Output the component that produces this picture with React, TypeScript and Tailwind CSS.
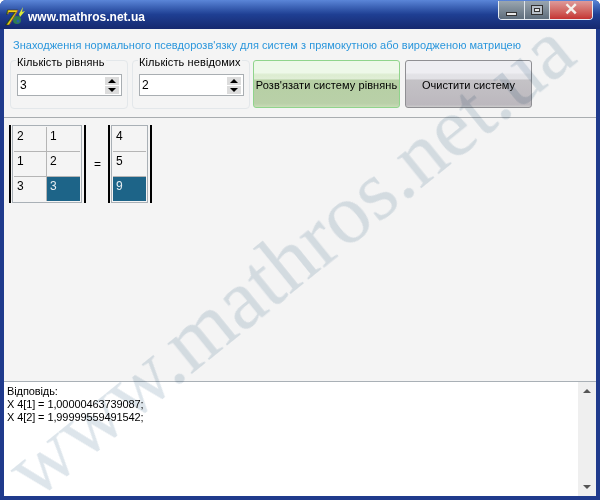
import React from 'react';

const leftMatrix = [
  ['2', '1'],
  ['1', '2'],
  ['3', '3'],
];
const rightMatrix = [['4'], ['5'], ['9']];

function Logo() {
  return (
    <svg width="20" height="20" viewBox="0 0 20 20" className="shrink-0">
      <circle cx="12" cy="14" r="4" fill="#2f7d4f" />
      <circle cx="13" cy="15" r="1.5" fill="#2a5fb0" />
      <path d="M14 8 L18 1 L17 6 L20 5 L15 11 Z" fill="#d8e83a" />
      <text x="0" y="19" fontFamily="'Liberation Serif', serif" fontWeight="700" fontStyle="italic" fontSize="24" fill="#f2d21a" stroke="#3a2a00" strokeWidth="0.5">
        7
      </text>
    </svg>
  );
}

function Spinner({ label, value }: { label: string; value: string }) {
  return (
    <div className="relative h-[49px] w-[118px] rounded-[4px] border border-[#e3e7ea]">
      <span className="absolute left-[5px] top-[-6px] whitespace-nowrap bg-[#f4f4f4] px-px text-[11px] leading-[14px] tracking-[0.1px] text-black">
        {label}
      </span>
      <div className="ml-[6px] mt-[13px] flex h-[22px] w-[105px] items-center justify-between border border-[#a9aeb2] bg-white pl-[2px] pr-[2px]">
        <span className="text-[12px]">{value}</span>
        <div className="flex flex-col gap-px">
          <div className="flex h-[8px] w-[14px] items-center justify-center bg-[#dcdcdc]">
            <div className="h-0 w-0 border-x-[4px] border-b-[4px] border-x-transparent border-b-black" />
          </div>
          <div className="flex h-[8px] w-[14px] items-center justify-center bg-[#dcdcdc]">
            <div className="h-0 w-0 border-x-[4px] border-t-[4px] border-x-transparent border-t-black" />
          </div>
        </div>
      </div>
    </div>
  );
}

function Grid({ rows, widths }: { rows: string[][]; widths: string[] }) {
  return (
    <div className="flex items-stretch">
      <div className="w-[2px] bg-black" />
      <div className="ml-[1px] mr-[2px] border border-[#a9b0b6] p-px">
        {rows.map((row, r) => (
          <div key={r} className={`flex ${r < 2 ? 'border-b border-[#b5b5b5]' : ''}`}>
            {row.map((cell, c) => {
              const selected = r === 2 && c === row.length - 1;
              return (
                <div
                  key={c}
                  className={`h-[24px] pl-[3px] text-[12px] leading-[19px] ${widths[c]} ${
                    c < row.length - 1 ? 'border-r border-[#b5b5b5]' : ''
                  } ${selected ? 'bg-[#1d6488] text-[#e8eef2]' : 'text-black'}`}
                >
                  {cell}
                </div>
              );
            })}
          </div>
        ))}
      </div>
      <div className="w-[2px] bg-black" />
    </div>
  );
}

export default function App() {
  return (
    <div
      className="flex h-[500px] w-[600px] flex-col overflow-hidden rounded-t-[6px] bg-[#1f3a8c] text-black"
      style={{ fontFamily: "'Liberation Sans', Arial, sans-serif" }}
    >
      {/* Title bar */}
      <div className="flex h-[29px] shrink-0 items-center justify-between bg-gradient-to-b from-[#5b86d8] via-[#1f3f93] to-[#16296f] pl-[5px] pr-[7px]">
        <div className="flex items-center gap-[3px] pt-[3px]">
          <Logo />
          <span className="mt-[1px] text-[12px] font-bold text-white">www.mathros.net.ua</span>
        </div>
        <div className="mb-[9px] flex h-[19px] w-[95px] overflow-hidden rounded-b-[4px] border border-t-0 border-[#e6ecf2]">
          <div className="flex w-[25px] items-end justify-center bg-gradient-to-b from-[#9aa6b0] to-[#5f6e7c] pb-[3px]">
            <div className="h-[4px] w-[11px] border border-[#333] bg-[#e8e8e8]" />
          </div>
          <div className="flex w-[26px] items-center justify-center border-x border-[#dfe5ea] bg-gradient-to-b from-[#9aa6b0] to-[#5f6e7c]">
            <div className="flex h-[10px] w-[12px] items-center justify-center border border-[#333] bg-[#b8c0c8]">
              <div className="h-[4px] w-[6px] border border-[#333] bg-[#e8e8e8]" />
            </div>
          </div>
          <div className="flex flex-1 items-center justify-center bg-gradient-to-b from-[#dd9a9a] to-[#c43232] text-[17px] font-bold leading-none text-[#f4f0ec]">
            ✕
          </div>
        </div>
      </div>

      {/* Client area */}
      <div className="relative mx-[4px] mb-[4px] flex min-h-0 flex-1 flex-col overflow-hidden bg-[#f4f4f4]">
        <div className="h-[89px] shrink-0 border-b border-[#a9adb0] px-[6px] pt-[9px]">
          <p className="whitespace-nowrap pl-[3px] text-[11px] leading-[14px] tracking-[0.03px] text-[#2a96dc]">
            Знаходження нормального псевдорозв'язку для систем з прямокутною або виродженою матрицею
          </p>
          <div className="mt-[8px] flex">
            <Spinner label="Кількість рівнянь" value="3" />
            <div className="w-[4px]" />
            <Spinner label="Кількість невідомих" value="2" />
            <button className="ml-[3px] h-[48px] w-[147px] whitespace-nowrap rounded-[3px] border border-[#90d48c] bg-[linear-gradient(#eef8e9_0%,#eef8e9_25%,#dcecd0_30%,#e0eed6_38%,#b6cfa4_42%,#b9d0a8_92%,#c8dcb6_100%)] pt-[3px] text-[11px] tracking-[0.07px] text-black">
              Розв'язати систему рівнянь
            </button>
            <button className="ml-[5px] h-[48px] w-[127px] whitespace-nowrap rounded-[3px] border border-[#8f8f93] bg-[linear-gradient(#eeeef2_0%,#eeeef2_25%,#e2e2e6_30%,#e2e2e6_38%,#c4c2c6_42%,#bcb8be_95%,#cccccc_100%)] pt-[3px] text-[11px] tracking-[0.02px] text-black">
              Очистити систему
            </button>
          </div>
        </div>

        {/* Matrices */}
        <div className="flex min-h-0 flex-1 items-start pl-[5px] pt-[7px]">
          <Grid rows={leftMatrix} widths={['w-[33px]', 'w-[33px]']} />
          <span className="ml-[8px] mr-[7px] mt-[30px] text-[12px]">=</span>
          <Grid rows={rightMatrix} widths={['w-[33px]']} />
        </div>

        {/* Answer */}
        <div className="flex h-[115px] shrink-0 border-t border-[#a9b0b6] bg-white">
          <div className="flex-1 pl-[3px] pt-[3px] text-[11px] leading-[13px] tracking-[-0.1px]">
            <div>Відповідь:</div>
            <div>X 4[1] = 1,00000463739087;</div>
            <div>X 4[2] = 1,99999559491542;</div>
          </div>
          <div className="flex w-[18px] flex-col items-center justify-between bg-[#efefef] py-[7px]">
            <div className="h-0 w-0 border-x-[4px] border-b-[4px] border-x-transparent border-b-[#555]" />
            <div className="h-0 w-0 border-x-[4px] border-t-[4px] border-x-transparent border-t-[#555]" />
          </div>
        </div>

        {/* Watermark */}
        <div className="pointer-events-none absolute left-[-65px] top-[187px] -rotate-[39deg] whitespace-nowrap text-[85px] leading-none text-[#dde5eb] mix-blend-multiply" style={{ fontFamily: "'Liberation Serif', serif" }}>
          www.mathros.net.ua
        </div>
      </div>
    </div>
  );
}
